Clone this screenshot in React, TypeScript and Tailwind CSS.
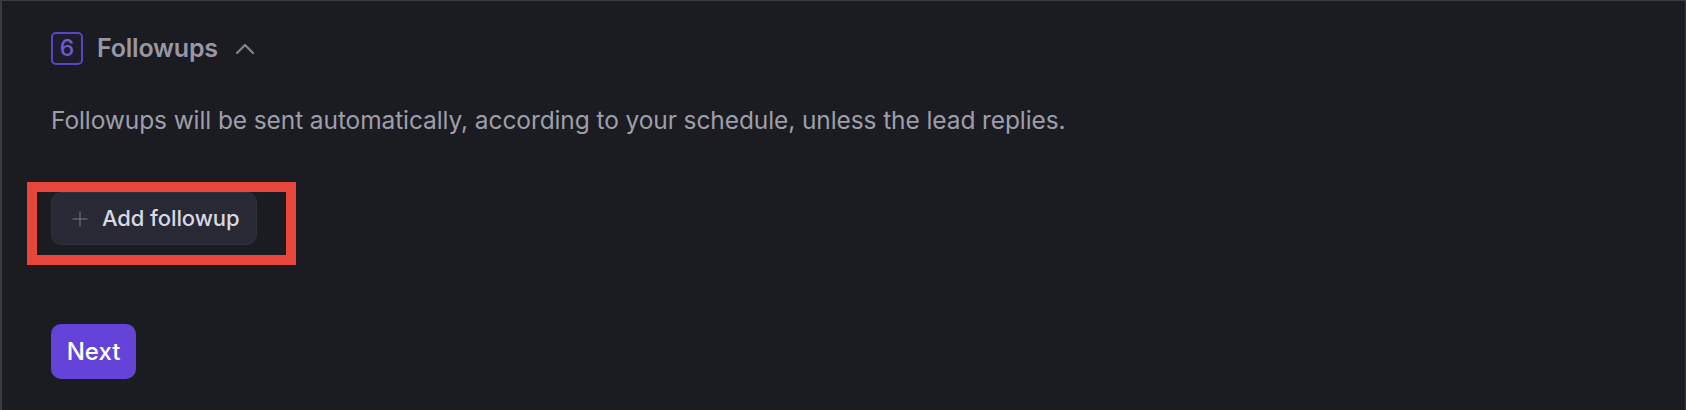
import React from "react";

export default function App() {
  return (
    <div className="w-[1686px] h-[410px] overflow-hidden bg-[#1b1c21] border-l-2 border-t border-r border-[#3a3a41] pl-[49px] pt-[31px] font-['Inter','Noto_Sans',sans-serif]">
      <div className="flex items-center h-[33px]">
        <div className="w-[32px] h-[33px] rounded-[5px] border-2 border-[#5646c0] bg-[#1e1c2c] flex items-center justify-center text-[23px] font-medium text-[#6c5cd6] leading-none">
          6
        </div>
        <div className="ml-[14px] text-[25px] font-semibold text-[#9797a5] leading-none tracking-[-0.2px]">
          Followups
        </div>
        <svg
          className="ml-[11px]"
          width="32"
          height="32"
          viewBox="0 0 24 24"
          fill="none"
          stroke="#85858f"
          strokeWidth="1.6"
          strokeLinecap="round"
          strokeLinejoin="round"
        >
          <path d="m18 15-6-6-6 6" />
        </svg>
      </div>

      <p className="mt-[39px] text-[24.5px] leading-[32px] text-[#9e9eab] tracking-[-0.1px]">
        Followups will be sent automatically, according to your schedule, unless the lead replies.
      </p>

      <div className="relative mt-[56px] w-[206px]">
        <button className="flex items-center w-[206px] h-[53px] rounded-[10px] bg-[#292936] border border-[#30303c] pl-[20px] text-[22px] font-medium text-[#d8d8e1] tracking-[-0.1px]">
          <svg width="16" height="16" viewBox="0 0 16 16" fill="none" stroke="#5f5f6d" strokeWidth="1.5" strokeLinecap="round">
            <path d="M8 1v14M1 8h14" />
          </svg>
          <span className="ml-[14px]">Add followup</span>
        </button>
        <div className="absolute left-[-24px] top-[-10px] w-[269px] h-[83px] border-[10px] border-[#e8453c] pointer-events-none" />
      </div>

      <button className="mt-[79px] w-[85px] h-[55px] rounded-[10px] bg-[#6543d8] text-white text-[24px] font-medium flex items-center justify-center">
        Next
      </button>
    </div>
  );
}
